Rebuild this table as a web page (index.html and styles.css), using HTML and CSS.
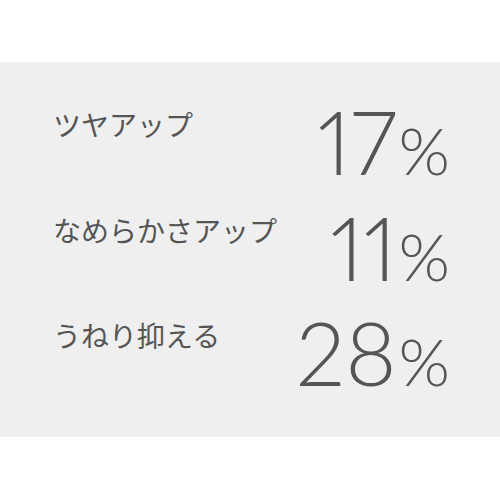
FILE: index.html
```html
<!DOCTYPE html>
<html lang="ja">
<head>
<meta charset="utf-8">
<link rel="stylesheet" href="styles.css">
</head>
<body>
<div class="panel">
  <div class="row">
    <div class="label">ツヤアップ</div>
    <div class="value"><span class="num">17</span><span class="pct">%</span></div>
  </div>
  <div class="row">
    <div class="label">なめらかさアップ</div>
    <div class="value"><span class="num">11</span><span class="pct">%</span></div>
  </div>
  <div class="row">
    <div class="label">うねり抑える</div>
    <div class="value"><span class="num">28</span><span class="pct">%</span></div>
  </div>
</div>
</body>
</html>
```
FILE: styles.css
```css
html, body {
  margin: 0;
  padding: 0;
  background: #ffffff;
}
.panel {
  margin-top: 62px;
  height: 375px;
  box-sizing: border-box;
  background: #efefef;
  padding: 35px 50px 0 53px;
  color: #555555;
}
.row {
  display: flex;
  justify-content: space-between;
  align-items: flex-start;
  height: 105.5px;
}
.label {
  font-family: "Noto Sans CJK JP", sans-serif;
  font-size: 28px;
  line-height: 1;
  margin-top: 13px;
}
.value {
  display: flex;
  align-items: baseline;
  font-family: Lato, sans-serif;
  font-weight: 300;
  line-height: 1;
  font-variant-numeric: proportional-nums;
}
.num {
  font-size: 88px;
}
.pct {
  font-size: 66px;
  margin-left: 2px;
}
```
